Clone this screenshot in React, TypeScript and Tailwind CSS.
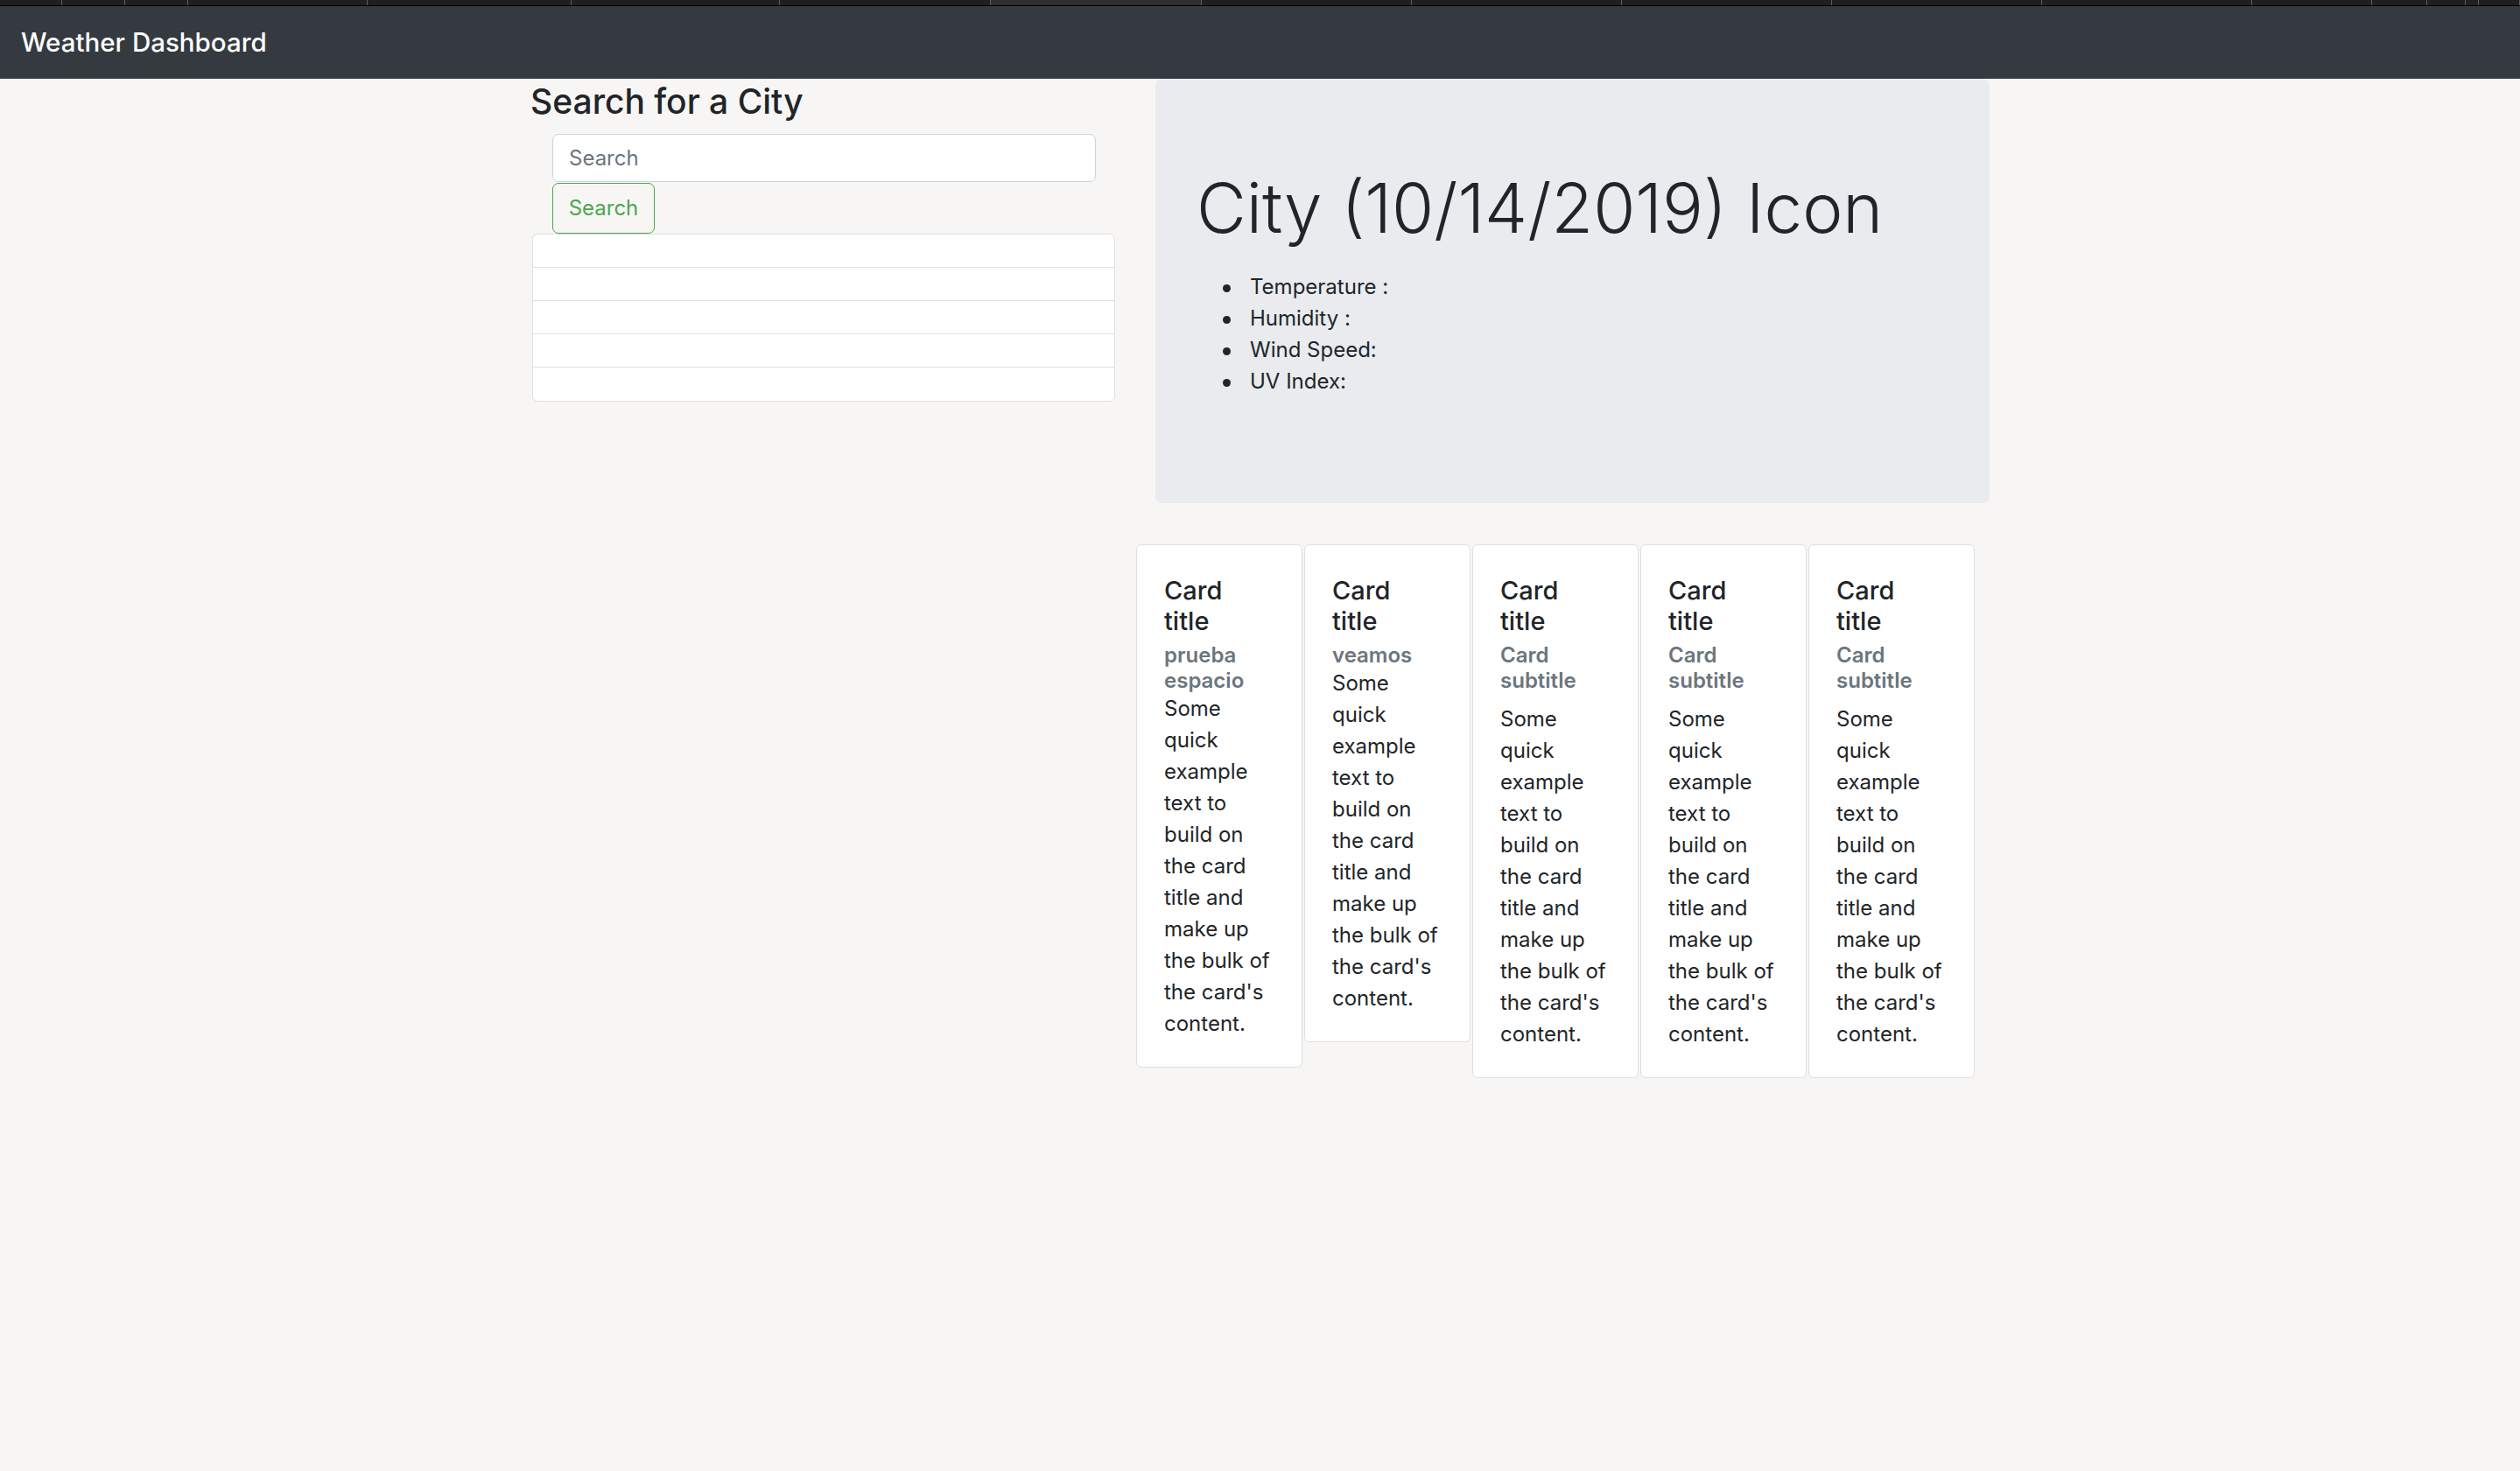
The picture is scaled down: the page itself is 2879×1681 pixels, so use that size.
import React from 'react';

const tabs = [71, 72, 72, 205, 233, 238, 241, 241, 240, 240, 240, 240, 240, 137, 63, 44, 15, 47];

const cards = [
  { subtitle: 'prueba espacio', tight: true },
  { subtitle: 'veamos', tight: true },
  { subtitle: 'Card subtitle', tight: false },
  { subtitle: 'Card subtitle', tight: false },
  { subtitle: 'Card subtitle', tight: false },
];

const stats = ['Temperature :', 'Humidity :', 'Wind Speed:', 'UV Index:'];

export default function App() {
  return (
    <div className="min-h-screen bg-[#f7f6f4] font-['Inter','Noto_Sans',sans-serif] text-[#212529]">
      {/* browser tab strip */}
      <div className="flex h-[6px] bg-[#1f1f1f]">
        {tabs.map((w, i) => (
          <div
            key={i}
            className={`h-full shrink-0 border-r border-[#5c5c5c] ${i === 7 ? 'bg-[#2f2f2f]' : ''}`}
            style={{ width: w }}
          />
        ))}
      </div>
      <div className="h-[1px] bg-black" />

      {/* navbar */}
      <nav className="flex h-[83px] items-center bg-[#343a40] pl-[24px]">
        <span className="text-[29.5px] font-medium leading-none text-white">Weather Dashboard</span>
      </nav>

      <div className="mx-auto w-[1667px]">
        <div className="flex items-start gap-[45px]">
          {/* search column */}
          <div className="w-[669px] shrink-0">
            <h3 className="mt-[2px] mb-[14px] text-[39px] font-medium leading-[47px]">Search for a City</h3>
            <input
              type="text"
              placeholder="Search"
              className="ml-[25px] block h-[55px] w-[621px] rounded-[7px] border border-[#ced4da] bg-white px-[18px] text-[24px] outline-none placeholder:text-[#6c757d]"
            />
            <button className="ml-[25px] mt-[1px] block h-[58px] w-[117px] rounded-[7px] border border-[#4ca64c] text-[24px] text-[#4ca64c]">
              Search
            </button>
            <ul className="ml-[2px] w-[666px] overflow-hidden rounded-[6px] border border-[#dfdfdf] bg-white">
              {[0, 1, 2, 3, 4].map((i) => (
                <li key={i} className={`h-[38px] ${i < 4 ? 'border-b border-[#dfdfdf]' : ''}`} />
              ))}
            </ul>
          </div>

          {/* current weather */}
          <div className="w-[953px] shrink-0 rounded-[8px] bg-[#e9ebef] px-[50px] pt-[98px] pb-[101px]">
            <h1 className="mb-[22px] ml-[-3px] text-[78px] font-light leading-[100px] whitespace-nowrap">
              City (10/14/2019) Icon
            </h1>
            <ul className="mb-[20px] pl-[27px] text-[24px] leading-[36px]">
              {stats.map((s) => (
                <li key={s} className="flex items-center gap-[22px]">
                  <span className="mt-[3px] h-[9px] w-[9px] shrink-0 rounded-full bg-[#212529]" />
                  <span>{s}</span>
                </li>
              ))}
            </ul>
          </div>
        </div>

        {/* forecast cards */}
        <div className="mt-[47px] ml-[692px] flex items-start gap-[2px]">
          {cards.map((c, i) => (
            <div key={i} className="w-[190px] shrink-0 rounded-[6px] border border-[#dfdfdf] bg-white p-[31px]">
              <h5 className="mt-[3px] mb-[7px] w-min text-[29px] font-medium leading-[35px]">Card title</h5>
              <h6 className={`text-[24px] font-semibold leading-[29px] text-[#6c757d] ${c.tight ? '' : 'mb-[12px]'}`}>
                {c.subtitle}
              </h6>
              <p className="text-[24px] leading-[36px]">
                Some quick example text to build on the card title and make up the bulk of the card's content.
              </p>
            </div>
          ))}
        </div>
      </div>
    </div>
  );
}
